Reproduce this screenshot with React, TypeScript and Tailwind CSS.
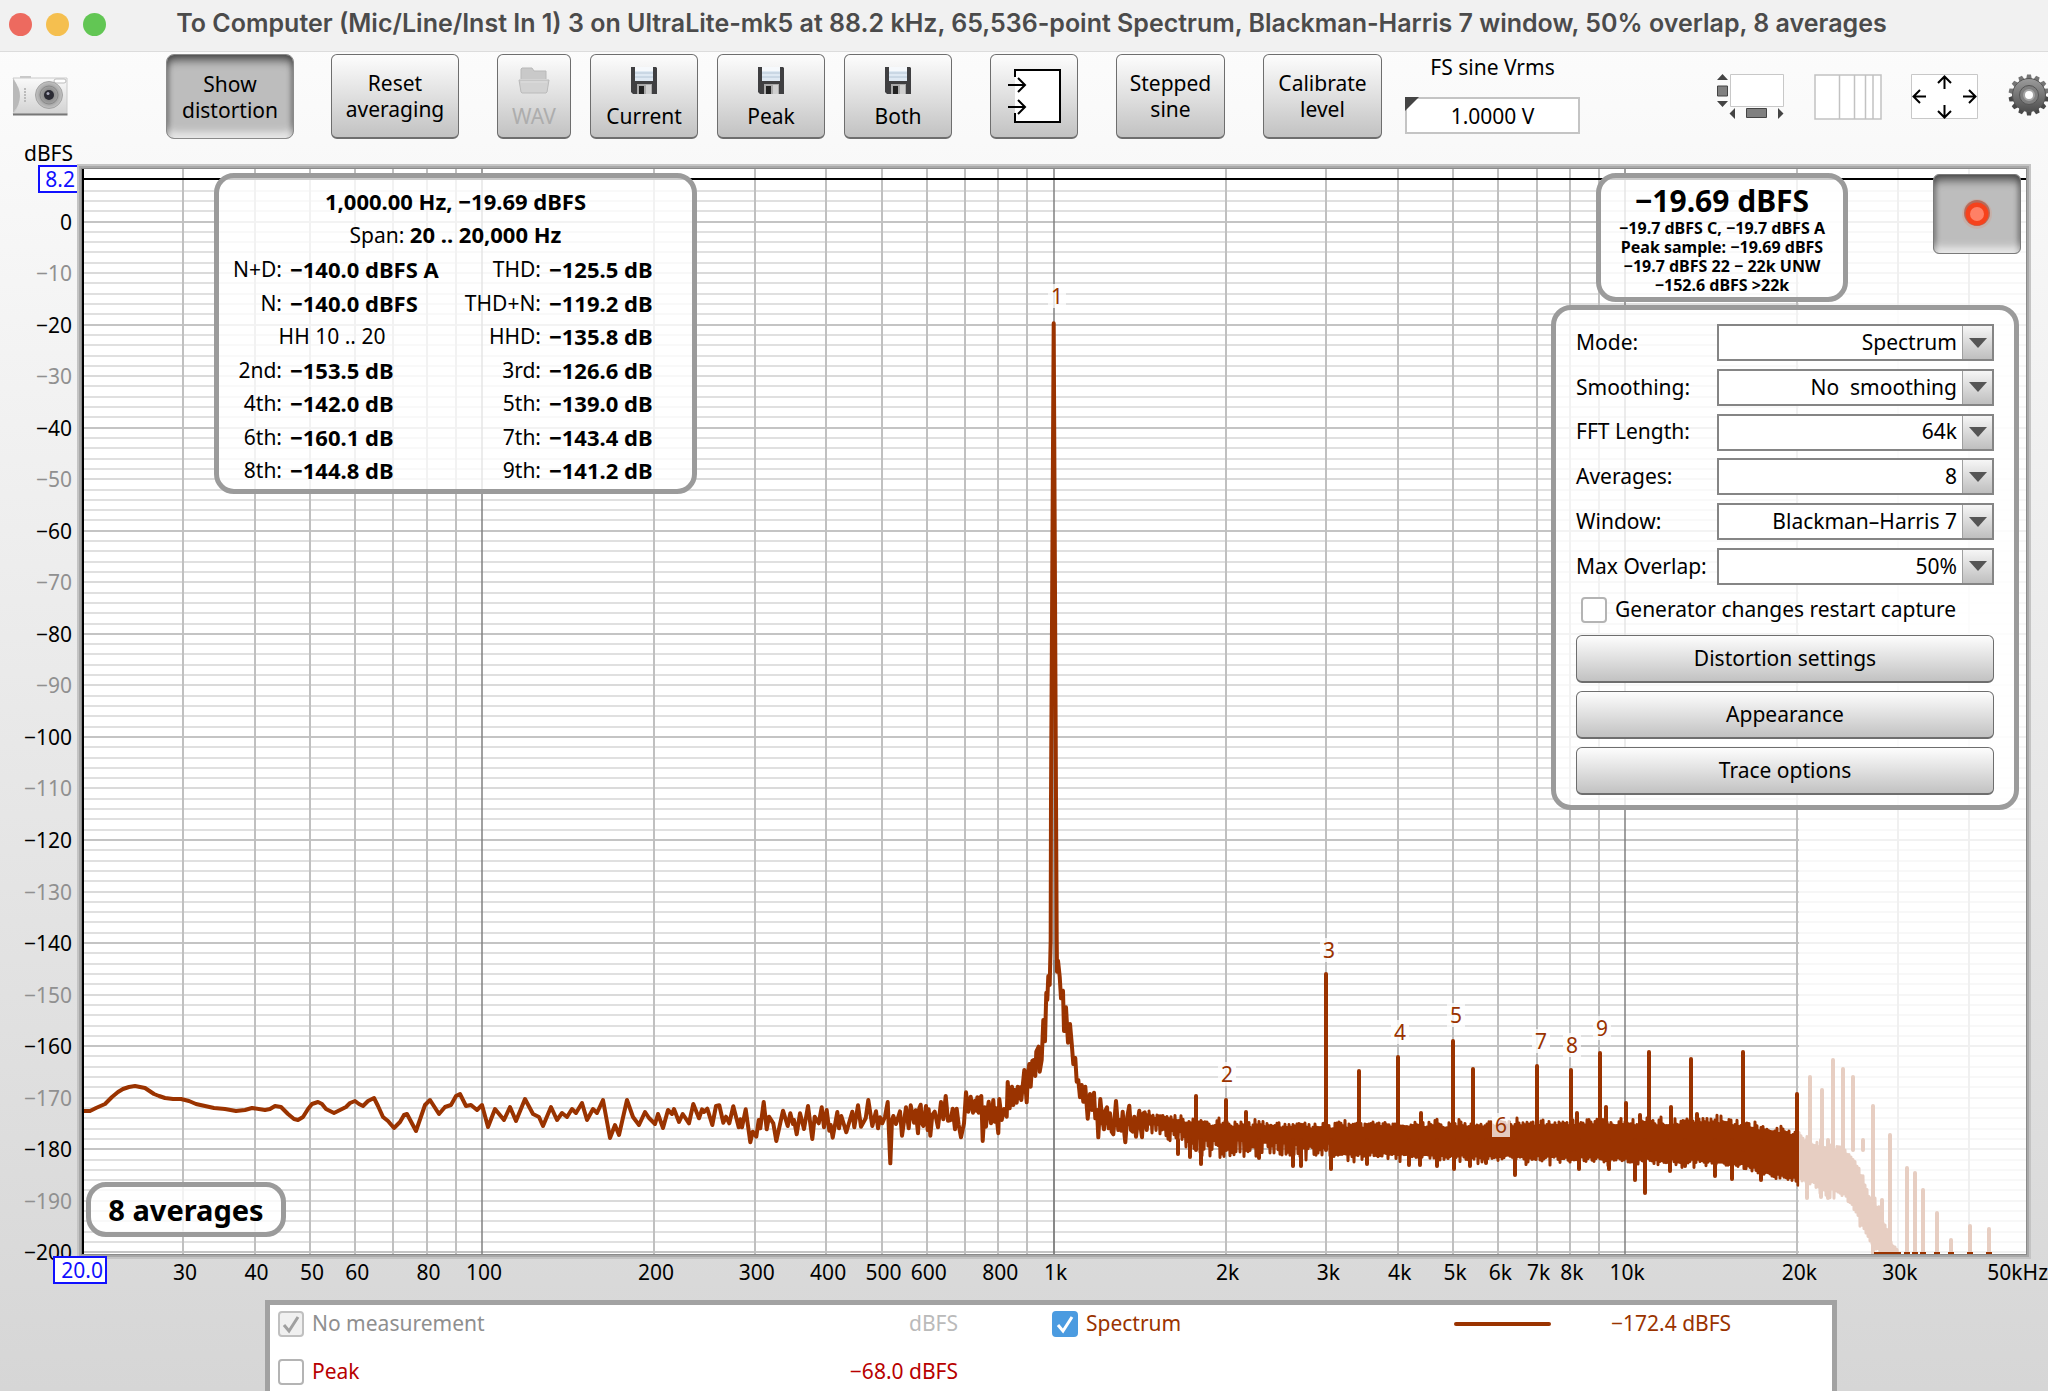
import React, { ReactNode } from 'react';

/* ---------- plot geometry ---------- */

const PLOT = { left: 82, top: 169, width: 1944, height: 1085 };

const xOf = (hz: number) => 482 + (Math.log10(hz) - 2) * 571.6;
const yOf = (db: number) => 221.5 - db * 5.154;

const pctX = (x: number) => `${((x - PLOT.left) / PLOT.width) * 100}%`;
const pctY = (y: number) => `${((y - PLOT.top) / PLOT.height) * 100}%`;

const GRID_HZ = [
  30, 40, 50, 60, 70, 80, 90, 100, 200, 300, 400, 500, 600, 700, 800, 900, 1000, 2000, 3000, 4000, 5000, 6000, 7000,
  8000, 9000, 10000, 20000, 30000, 40000,
];

const FREQ_LABELS: [number, string][] = [
  [30, '30'],
  [40, '40'],
  [50, '50'],
  [60, '60'],
  [80, '80'],
  [100, '100'],
  [200, '200'],
  [300, '300'],
  [400, '400'],
  [500, '500'],
  [600, '600'],
  [800, '800'],
  [1000, '1k'],
  [2000, '2k'],
  [3000, '3k'],
  [4000, '4k'],
  [5000, '5k'],
  [6000, '6k'],
  [7000, '7k'],
  [8000, '8k'],
  [10000, '10k'],
  [20000, '20k'],
  [30000, '30k'],
];

const HARMONICS: [string, number, number][] = [
  ['1', 1057, 296],
  ['2', 1227, 1074],
  ['3', 1329, 950],
  ['4', 1400, 1032],
  ['5', 1456, 1015],
  ['6', 1501, 1125],
  ['7', 1541, 1041],
  ['8', 1572, 1045],
  ['9', 1602, 1028],
];

/* ---------- trace data ---------- */

const LOW: number[][] = [
  [83, 1111], [90, 1111], [96, 1108], [105, 1104], [112, 1097], [118, 1092], [123, 1089], [129, 1087], [135, 1086], [140, 1087],
  [145, 1088], [154, 1094], [159, 1096], [165, 1098], [173, 1099], [181, 1099], [189, 1101], [196, 1104], [205, 1106],
  [214, 1108], [225, 1109], [236, 1111], [245, 1110], [252, 1108], [265, 1110], [270, 1109], [275, 1106], [281, 1107],
  [288, 1114], [294, 1119], [298, 1120], [303, 1117], [308, 1109], [312, 1104], [318, 1102], [322, 1104], [326, 1109],
  [334, 1113], [346, 1107], [350, 1103], [355, 1101], [359, 1104], [363, 1106], [368, 1101], [374, 1098], [378, 1106],
  [383, 1117], [388, 1121], [394, 1128], [400, 1122], [404, 1115], [407, 1114], [416, 1131], [425, 1105], [430, 1100],
  [439, 1114], [445, 1107], [451, 1105], [456, 1096], [460, 1094], [466, 1106], [471, 1105], [477, 1110], [482, 1105],
  [488, 1127], [495, 1109], [504, 1120], [510, 1107], [516, 1121], [525, 1099], [533, 1114], [539, 1117], [543, 1126],
  [551, 1107], [557, 1120], [562, 1113], [567, 1117], [572, 1109], [576, 1113], [582, 1103], [587, 1120], [593, 1109],
  [597, 1113], [603, 1100], [610, 1138], [615, 1125], [619, 1135], [627, 1100], [633, 1117], [639, 1125], [645, 1112],
  [649, 1118], [655, 1124], [658, 1114], [663, 1128], [668, 1110], [672, 1114], [674, 1109], [679, 1122],
];

// offsets from (680, 1040) in thirds
const MID: number[][] = [
  [8, 222], [27, 250], [40, 192], [57, 235], [66, 208], [72, 216], [82, 206], [97, 255], [108, 198], [118, 196], [130, 248],
  [138, 230], [148, 250], [160, 199], [176, 262], [181, 238], [186, 262], [197, 208], [211, 307], [218, 275], [229, 290],
  [236, 240], [241, 265], [251, 186], [260, 268], [267, 230], [280, 250], [289, 303], [309, 212], [323, 258], [331, 220],
  [339, 252], [342, 240], [350, 283], [360, 220], [372, 267], [384, 198], [397, 297], [404, 230], [416, 250], [425, 202],
  [432, 262], [440, 210], [448, 272], [452, 255], [458, 293], [472, 216], [477, 265], [484, 228], [499, 277], [517, 215],
  [523, 262], [534, 196], [543, 260], [557, 235], [565, 180], [577, 258], [588, 214], [594, 265], [600, 232], [607, 250],
  [615, 230], [623, 186], [631, 370], [636, 240], [640, 228], [648, 252], [660, 214], [666, 287], [678, 202], [686, 265],
  [692, 196], [702, 248], [707, 211], [714, 280], [718, 205], [722, 194], [726, 250], [730, 258], [738, 198], [743, 270],
  [746, 208], [751, 287], [757, 225], [764, 215], [774, 262], [783, 186], [790, 238], [797, 168], [804, 242], [812, 240],
  [818, 206], [825, 268], [830, 206], [836, 255], [843, 292], [852, 250], [858, 157], [865, 215], [872, 170], [879, 218],
  [885, 182], [889, 212], [892, 172], [896, 218], [900, 175], [904, 168], [908, 303], [914, 202], [918, 260], [922, 215],
  [926, 185], [933, 250], [940, 180], [944, 245], [948, 205], [951, 240], [955, 280], [958, 177], [965, 240], [972, 207],
  [980, 230], [983, 126], [989, 205], [993, 150], [996, 140], [1000, 195], [1004, 150], [1010, 188], [1013, 140], [1017, 175],
  [1021, 142], [1024, 180], [1033, 90], [1040, 187],
];

// offsets from (960, 900) in thirds, runs through the fundamental
const PEAK: number[][] = [
  [204, 520], [208, 492], [212, 560], [217, 482], [221, 480], [226, 528], [229, 455], [236, 440], [239, 515], [245, 480],
  [250, 360], [255, 424], [259, 278], [262, 300], [265, 228], [269, 255], [272, 120], [273, -300], [281, -1730],
  [288, -300], [290, 120], [291, 215], [294, 182], [299, 230], [303, 295], [309, 272], [312, 393], [318, 322], [324, 428],
  [330, 372], [335, 430], [340, 492], [346, 474], [350, 545], [355, 540], [360, 592], [365, 555], [370, 605], [376, 560],
  [383, 656], [390, 582], [396, 630], [402, 578], [406, 655], [411, 630], [415, 712], [421, 597], [427, 660], [432, 688],
  [436, 632], [441, 622], [446, 685], [450, 640], [455, 695], [460, 703], [468, 603], [475, 690], [480, 660], [484, 692],
  [488, 635], [492, 690], [496, 727], [502, 650], [508, 617], [513, 690], [518, 695], [523, 650], [528, 710], [534, 660],
  [538, 632], [543, 690], [546, 712], [550, 640], [554, 637], [560, 690], [565, 645],
];

// x, upper edge, lower edge of the noise band
const BAND: number[][] = [
  [1149, 1113, 1134], [1170, 1114, 1142], [1200, 1120, 1152], [1250, 1122, 1154], [1300, 1123, 1156], [1350, 1123, 1157],
  [1400, 1122, 1157], [1450, 1122, 1160], [1520, 1121, 1160], [1600, 1120, 1162], [1660, 1120, 1163], [1720, 1118, 1165],
  [1740, 1121, 1168], [1765, 1126, 1176], [1798, 1131, 1182], [1815, 1143, 1188], [1832, 1146, 1194], [1842, 1142, 1196],
  [1853, 1156, 1211], [1862, 1172, 1232], [1870, 1194, 1245], [1879, 1204, 1256], [1888, 1234, 1256], [1900, 1254, 1256],
];

const SPIKES: number[][] = [
  [1196, 1096], [1226, 1100], [1246, 1112], [1326, 974], [1359, 1071], [1398, 1057], [1421, 1113], [1453, 1041], [1473, 1069],
  [1537, 1066], [1571, 1070], [1577, 1113], [1600, 1053], [1606, 1107], [1626, 1103], [1640, 1115], [1649, 1052],
  [1671, 1107], [1691, 1059], [1697, 1114], [1743, 1052], [1797, 1094], [1810, 1077], [1822, 1090], [1833, 1060],
  [1843, 1069], [1853, 1077], [1863, 1140], [1873, 1106], [1882, 1200], [1890, 1135], [1907, 1168], [1915, 1173],
  [1923, 1190], [1937, 1213], [1951, 1240], [1970, 1226], [1989, 1229],
];

const DIPS: number[][] = [
  [1178, 1154], [1190, 1157], [1201, 1164], [1259, 1158], [1293, 1166], [1301, 1166], [1331, 1169], [1367, 1164],
  [1409, 1165], [1420, 1165], [1437, 1166], [1454, 1169], [1470, 1166], [1486, 1163], [1515, 1175], [1579, 1169],
  [1609, 1169], [1635, 1180], [1645, 1193], [1670, 1171], [1685, 1166], [1715, 1176], [1732, 1179], [1761, 1180],
  [1807, 1198], [1821, 1197], [1828, 1198],
];

function bandAt(x: number) {
  const i = Math.max(1, BAND.findIndex((b) => b[0] >= x));
  const [x0, t0, b0] = BAND[i - 1];
  const [x1, t1, b1] = BAND[i];
  const k = (x - x0) / (x1 - x0);
  return [t0 + (t1 - t0) * k, b0 + (b1 - b0) * k];
}

function buildNoise() {
  let seed = 4711;
  const rand = () => {
    seed = (seed * 16807) % 2147483647;
    return seed / 2147483647;
  };
  const points: string[] = [];
  for (let x = 1149; x < 1899; x += 2) {
    const [top, bottom] = bandAt(x);
    const up = rand() < 0.12 ? -3 * rand() : 6 * rand();
    const spread = x < 1330 ? 14 : 5;
    const down = rand() < 0.15 ? 5 * rand() : -spread * rand();
    points.push(`${x},${(top + up).toFixed(1)}`, `${x + 1},${(bottom + down).toFixed(1)}`);
  }
  return points.join(' ');
}

const linePoints = [
  ...LOW,
  ...MID.map(([x, y]) => [680 + x / 3, 1040 + y / 3]),
  ...PEAK.map(([x, y]) => [960 + x / 3, 900 + y / 3]),
]
  .map(([x, y]) => `${x.toFixed(1)},${y.toFixed(1)}`)
  .join(' ');

const noisePoints = buildNoise();

const spikePath = [
  ...SPIKES.map(([x, y]) => `M${x} ${y}V${x > 1870 ? 1254 : 1150}`),
  ...DIPS.map(([x, y]) => `M${x} 1140V${y}`),
].join('');

/* ---------- shared bits ---------- */

const raised =
  'rounded-md border border-[#6e6e6e] border-b-2 bg-linear-to-b from-[#fdfdfd] via-[#e0e0e0] to-[#c2c2c2] text-black';
const panel = 'rounded-[20px] border-[5px] border-[#9b9b9b] bg-white/80';

interface ToolButtonProps {
  className?: string;
  disabled?: boolean;
  label?: string;
  children: ReactNode;
}

function ToolButton({ className = '', disabled, label, children }: ToolButtonProps) {
  return (
    <button
      type="button"
      disabled={disabled}
      aria-label={label}
      className={`${raised} flex h-[85px] shrink-0 flex-col items-center justify-center leading-[26px] disabled:text-[#adadad] ${className}`}
    >
      {children}
    </button>
  );
}

function Floppy() {
  return (
    <svg width="28" height="28" viewBox="0 0 28 28" className="mt-1 mb-2">
      <path d="M1 0h25l1 1v26H3l-2-2z" fill="#3f3f41" />
      <path d="M5 0h18v14H5z" fill="#dfe9f3" />
      <path d="M5 0h18v4H5z" fill="#f6f9fc" />
      <path d="M5 6h18M5 10h18" stroke="#b5c6d6" />
      <path d="M7 17h15v10H7z" fill="#a9a9a9" />
      <path d="M9 19h5v8H9z" fill="#222" />
      <path d="M16 18h5v9h-5z" fill="#cfcfcf" />
    </svg>
  );
}

function Folder() {
  return (
    <svg width="32" height="28" viewBox="0 0 32 28" className="mt-1 mb-2">
      <path d="M3 12V2l1-1h10l2 3h12v8" fill="#c9c9c9" stroke="#b9b9b9" />
      <path d="M1 13h30l-2 12-1 1H4l-1-1z" fill="#d2d2d2" stroke="#bababa" />
      <path d="M3 15h26" stroke="#dedede" />
    </svg>
  );
}

function CameraIcon() {
  return (
    <svg width="57" height="40" viewBox="0 0 57 40">
      <defs>
        <linearGradient id="camBody" x1="0" y1="0" x2="0" y2="1">
          <stop offset="0" stopColor="#fafafa" />
          <stop offset="1" stopColor="#d2d2d2" />
        </linearGradient>
        <radialGradient id="camLens">
          <stop offset="0" stopColor="#777" />
          <stop offset="0.55" stopColor="#9b9b9b" />
          <stop offset="1" stopColor="#c4c4c4" />
        </radialGradient>
      </defs>
      <path d="M8 2V0h11v2z" fill="#c9c9c9" />
      <path d="M1 2h54v36H1q7-9 5-20Q5 8 1 2z" fill="url(#camBody)" stroke="#cacaca" />
      <path d="M1 3q14 17 0 34z" fill="#b9b9b9" />
      <path d="M1 38.500h54.500" stroke="#777" strokeWidth="2" />
      <path d="M13 12v14" stroke="#bbb" strokeWidth="2" strokeDasharray="2 1" />
      <rect x="42" y="3" width="12" height="4" rx="2" fill="#fff" stroke="#bbb" />
      <circle cx="37" cy="19" r="13.500" fill="url(#camLens)" stroke="#a3a3a3" />
      <circle cx="37" cy="19" r="9" fill="none" stroke="#8a8a8a" />
      <circle cx="37" cy="19" r="5" fill="#2a2a33" />
      <circle cx="36" cy="17.500" r="1.500" fill="#aab" />
    </svg>
  );
}

function InputIcon() {
  return (
    <svg width="54" height="56" viewBox="0 0 54 56" fill="none" stroke="#000" strokeWidth="2">
      <path d="M8 2h45v52H8z" fill="#fff" stroke="none" />
      <path d="M8 9V2h45v52H8v-9" />
      <path d="M1 17h17M11 10l7 7-7 7M1 39h17M11 32l7 7-7 7" />
    </svg>
  );
}

function ScrollbarsIcon() {
  return (
    <svg width="68" height="45" viewBox="0 0 68 45">
      <path d="M13.500 .5h53v32h-53z" fill="#fff" stroke="#c8c8c8" />
      <path d="M0 6L5.500 0 11 6zM0 27l5.500 6 5.500-6zM18 34v11l-5.500-5.500zM61 34v11l5.500-5.500z" fill="#444" />
      <path d="M.5 12h10v10H.5zM29.500 34.500h20v9h-20z" fill="#808080" stroke="#444" />
    </svg>
  );
}

function LogGridIcon() {
  return (
    <svg width="68" height="46" viewBox="0 0 68 46">
      <path d="M1 1h66v44H1zM25.500 1v44M40.500 1v44M51.500 1v44M59 1v44" fill="#fff" stroke="#c2c2c2" strokeWidth="1.500" />
    </svg>
  );
}

function FitIcon() {
  return (
    <svg width="68" height="46" viewBox="0 0 68 46" fill="none" stroke="#000" strokeWidth="2">
      <path d="M.5 .5h66v44H.5z" fill="#fff" stroke="#c8c8c8" strokeWidth="1" />
      <path d="M33.500 15V3M27 9l6.500-6.500L40 9M33.500 31v12M27 37l6.500 6.500L40 37" />
      <path d="M15 22.500H3M9 16l-6.500 6.500L9 29M52 22.500h12M58 16l6.500 6.500L58 29" />
    </svg>
  );
}

function GearIcon() {
  const teeth = Array.from({ length: 14 }, (_, i) => (i * 360) / 14);
  return (
    <svg width="42" height="42" viewBox="-21 -21 42 42">
      <defs>
        <linearGradient id="gearFill" x1="0" y1="0" x2="0" y2="1">
          <stop offset="0" stopColor="#9c9c9c" />
          <stop offset="1" stopColor="#4f4f4f" />
        </linearGradient>
      </defs>
      {teeth.map((a) => (
        <path key={a} d="M-3-15L-2-20.500H2L3-15z" transform={`rotate(${a})`} fill={Math.abs(a - 180) < 90 ? '#484848' : '#757575'} />
      ))}
      <circle r="16.500" fill="url(#gearFill)" stroke="#555" />
      <circle r="9.500" fill="#808080" stroke="#555" />
      <circle r="5" fill="#fff" stroke="#a5a5a5" strokeWidth="2" />
    </svg>
  );
}

interface TickBoxProps {
  id: string;
  label: string;
  className?: string;
  checked?: boolean;
  disabled?: boolean;
}

function TickBox({ id, label, className = '', checked, disabled }: TickBoxProps) {
  return (
    <div className={`flex items-center gap-2 ${className}`}>
      <span className="grid">
        <input
          id={id}
          type="checkbox"
          defaultChecked={checked}
          disabled={disabled}
          className="peer col-start-1 row-start-1 size-[26px] appearance-none rounded border-2 border-[#b4b4b4] bg-white checked:border-[#4b9be0] checked:bg-[#4b9be0] disabled:border-[#c0c0c0] disabled:bg-[#f0f0f0]"
        />
        <svg
          viewBox="0 0 26 26"
          className="pointer-events-none invisible col-start-1 row-start-1 size-[26px] stroke-white peer-checked:visible peer-disabled:stroke-[#a0a0a0]"
          fill="none"
          strokeWidth="3"
        >
          <path d="M6 14l5 6L20 6" />
        </svg>
      </span>
      <label htmlFor={id}>{label}</label>
    </div>
  );
}

/* ---------- sections ---------- */

function TitleBar() {
  return (
    <header className="flex h-[52px] items-start border-b border-[#dcdcdc] bg-[#f1f1f1] pl-[9px]">
      <div className="flex h-12 w-[98px] shrink-0 items-center gap-[14px]">
        <span className="size-[23px] rounded-full bg-[#ed6a5f]" />
        <span className="size-[23px] rounded-full bg-[#f5bf4f]" />
        <span className="size-[23px] rounded-full bg-[#62c654]" />
      </div>
      <h1 className="flex-1 pr-[92px] text-center font-[Inter,sans-serif] text-[25px] leading-[46px] font-semibold whitespace-nowrap text-[#4b4b4b]">
        To Computer (Mic/Line/Inst In 1) 3 on UltraLite-mk5 at 88.2 kHz, 65,536-point Spectrum, Blackman-Harris 7 window,
        50% overlap, 8 averages
      </h1>
    </header>
  );
}

function Toolbar() {
  return (
    <div className="flex h-[89px] items-start overflow-hidden pt-0.5 pl-3">
      <button type="button" aria-label="Capture image" className="mt-[22px] mr-[97px] shrink-0">
        <CameraIcon />
      </button>
      <button
        type="button"
        aria-pressed="true"
        className="h-[85px] w-32 shrink-0 rounded-lg border border-[#8a8a8a] bg-[#bdbdbd] leading-[26px] text-black shadow-[inset_0_8px_10px_-3px_#4a4a4a,inset_0_-8px_8px_-3px_#f2f2f2,inset_3px_0_4px_-1px_#777,inset_-3px_0_4px_-1px_#777]"
      >
        Show
        <br />
        distortion
      </button>
      <ToolButton className="ml-[37px] w-32">
        <span>Reset</span>
        <span>averaging</span>
      </ToolButton>
      <ToolButton className="ml-[38px] w-[74px]" disabled>
        <Folder />
        WAV
      </ToolButton>
      <div className="ml-[19px] flex gap-[19px]">
        <ToolButton className="w-[108px]">
          <Floppy />
          Current
        </ToolButton>
        <ToolButton className="w-[108px]">
          <Floppy />
          Peak
        </ToolButton>
        <ToolButton className="w-[108px]">
          <Floppy />
          Both
        </ToolButton>
      </div>
      <div className="ml-[38px] flex gap-[38px]">
        <ToolButton className="w-[88px]" label="Input selection">
          <InputIcon />
        </ToolButton>
        <ToolButton className="w-[109px]">
          <span>Stepped</span>
          <span>sine</span>
        </ToolButton>
        <ToolButton className="w-[119px]">
          <span>Calibrate</span>
          <span>level</span>
        </ToolButton>
      </div>
      <div className="ml-[23px] flex w-[175px] shrink-0 flex-col items-center gap-4">
        <label htmlFor="vrms" className="leading-[27px]">
          FS sine Vrms
        </label>
        <span className="relative w-full">
          <input
            id="vrms"
            defaultValue="1.0000 V"
            className="block h-[37px] w-full border-2 border-[#c4c4c4] bg-white text-center text-black"
          />
          <svg width="14" height="14" viewBox="0 0 14 14" className="absolute top-0 left-0">
            <path d="M0 0h14L0 14z" fill="#444" />
          </svg>
        </span>
      </div>
      <div className="ml-auto flex shrink-0 items-start gap-[29px] pt-5">
        <button type="button" aria-label="Scrollbars">
          <ScrollbarsIcon />
        </button>
        <button type="button" aria-label="Log frequency axis">
          <LogGridIcon />
        </button>
        <button type="button" aria-label="Graph limits">
          <FitIcon />
        </button>
        <button type="button" aria-label="Graph settings" className="-mr-0.5">
          <GearIcon />
        </button>
      </div>
    </div>
  );
}

function Graph() {
  const dbLines = Array.from({ length: 104 }, (_, i) => 6 - i * 2);
  return (
    <svg
      viewBox={`${PLOT.left} ${PLOT.top} ${PLOT.width} ${PLOT.height}`}
      preserveAspectRatio="none"
      className="absolute inset-0 size-full"
    >
      {dbLines.map((db) => {
        const y = Math.round(yOf(db));
        const major = db % 20 === 0;
        return (
          <path key={db} d={`M82 ${y}H2026`} stroke={major ? '#c4c4c4' : db % 10 === 0 ? '#dadada' : '#e0e0e0'} strokeWidth={2} />
        );
      })}
      {GRID_HZ.map((hz) => {
        const decade = hz === 100 || hz === 1000 || hz === 10000;
        return (
          <path
            key={hz}
            d={`M${Math.round(xOf(hz))} 169V1254`}
            stroke={decade ? '#808080' : '#c0c0c0'}
            strokeWidth={decade ? 1.5 : 2}
          />
        );
      })}
      <g fill="none" stroke="#9a3300" strokeLinejoin="round" strokeLinecap="round">
        <polyline points={linePoints} strokeWidth={4} />
        <polyline points={noisePoints} strokeWidth={3} />
        <path d={spikePath} strokeWidth={4} />
      </g>
      <path d="M1054 960V1254" stroke="#808080" strokeWidth={1.5} />
      <path d="M1799 169h227v1085h-227z" fill="#fff" fillOpacity={0.76} />
      <path
        d="M1874 1253H1901M1904 1253h6M1912 1253h6M1920 1253h6M1934 1253h6M1948 1253h6M1967 1253h6M1986 1253h6"
        stroke="#9a3300"
        strokeWidth={2}
      />
      <path d="M82 179H2026" stroke="#000" strokeWidth={2} />
      <path d="M83 169V1254" stroke="#000" strokeWidth={2} />
    </svg>
  );
}

const DISTORTION: [string, string, string, string][] = [
  ['N+D:', '−140.0 dBFS A', 'THD:', '−125.5 dB'],
  ['N:', '−140.0 dBFS', 'THD+N:', '−119.2 dB'],
  ['', 'HH 10 .. 20', 'HHD:', '−135.8 dB'],
  ['2nd:', '−153.5 dB', '3rd:', '−126.6 dB'],
  ['4th:', '−142.0 dB', '5th:', '−139.0 dB'],
  ['6th:', '−160.1 dB', '7th:', '−143.4 dB'],
  ['8th:', '−144.8 dB', '9th:', '−141.2 dB'],
];

function DistortionPanel() {
  return (
    <section className={`${panel} absolute top-1 left-[132px] h-[321px] w-[483px] pt-1.5 pb-0.5`}>
      <table className="h-full w-full table-fixed leading-6 whitespace-nowrap">
        <colgroup>
          <col className="w-[67px]" />
          <col className="w-[159px]" />
          <col className="w-[100px]" />
          <col />
        </colgroup>
        <tbody>
          <tr>
            <td colSpan={4} className="text-center text-[22px] font-bold">
              1,000.00 Hz, −19.69 dBFS
            </td>
          </tr>
          <tr>
            <td colSpan={4} className="text-center">
              Span: <b className="text-[22px]">20 .. 20,000 Hz</b>
            </td>
          </tr>
          {DISTORTION.map(([a, av, b, bv]) => (
            <tr key={b}>
              {a ? (
                <>
                  <th className="pr-1 text-right font-normal">{a}</th>
                  <td className="pl-1 text-[22px] font-bold">{av}</td>
                </>
              ) : (
                <td colSpan={2} className="text-center">
                  {av}
                </td>
              )}
              <th className="pr-1 text-right font-normal">{b}</th>
              <td className="pl-1 text-[22px] font-bold">{bv}</td>
            </tr>
          ))}
        </tbody>
      </table>
    </section>
  );
}

function LevelPanel() {
  return (
    <section
      className={`${panel} absolute top-1 right-[178px] flex h-[129px] w-[252px] flex-col items-center pt-[5px] text-base leading-[19px] font-bold whitespace-nowrap`}
    >
      <p className="text-[30px] leading-9">−19.69 dBFS</p>
      <p>−19.7 dBFS C, −19.7 dBFS A</p>
      <p>Peak sample: −19.69 dBFS</p>
      <p>−19.7 dBFS 22 − 22k UNW</p>
      <p>−152.6 dBFS &gt;22k</p>
    </section>
  );
}

const FIELDS: [string, string, string][] = [
  ['mode', 'Mode:', 'Spectrum'],
  ['smoothing', 'Smoothing:', 'No\u00a0 smoothing'],
  ['fft', 'FFT Length:', '64k'],
  ['averages', 'Averages:', '8'],
  ['window', 'Window:', 'Blackman–Harris 7'],
  ['overlap', 'Max Overlap:', '50%'],
];

function ControlPanel() {
  return (
    <section className={`${panel} absolute top-[136px] right-[7px] w-[468px] px-5 pt-3.5 pb-2.5`}>
      <div className="flex h-[261px] flex-col justify-between">
        {FIELDS.map(([id, label, value]) => (
          <div key={id} className="flex items-center">
            <label htmlFor={id} className="w-[141px] whitespace-nowrap">
              {label}
            </label>
            <span className="relative flex-1">
              <select
                id={id}
                className="block h-[37px] w-full appearance-none border-2 border-[#858585] bg-white pr-[35px] text-right text-black [text-align-last:right]"
              >
                <option>{value}</option>
              </select>
              <span className="pointer-events-none absolute inset-y-0.5 right-0.5 flex w-[30px] items-center justify-center border-l border-[#a0a0a0] bg-linear-to-b from-[#f6f6f6] to-[#bfbfbf]">
                <svg width="18" height="10" viewBox="0 0 18 10">
                  <path d="M0 0h18L9 10z" fill="#555" />
                </svg>
              </span>
            </span>
          </div>
        ))}
      </div>
      <TickBox id="restart" label="Generator changes restart capture" className="mt-2 mb-2 h-[34px] pl-[5px]" />
      <div className="flex flex-col gap-2">
        {['Distortion settings', 'Appearance', 'Trace options'].map((text) => (
          <button key={text} type="button" className={`${raised} h-12`}>
            {text}
          </button>
        ))}
      </div>
    </section>
  );
}

function RecordButton() {
  return (
    <button
      type="button"
      aria-label="Record"
      aria-pressed="true"
      className="absolute top-[5px] right-[5px] flex h-[80px] w-[88px] items-center justify-center rounded-md border border-[#7a7a7a] bg-[#bdbdbd] shadow-[inset_0_8px_10px_-3px_#4a4a4a,inset_0_-8px_8px_-3px_#f2f2f2,inset_3px_0_4px_-1px_#777,inset_-3px_0_4px_-1px_#777]"
    >
      <svg width="32" height="32" viewBox="0 0 32 32">
        <circle cx="16" cy="16" r="15" fill="#ff6a3a" fillOpacity="0.15" />
        <circle cx="16" cy="15" r="13" fill="#a8402a" fillOpacity="0.6" />
        <circle cx="16" cy="16" r="11.500" fill="#f6421c" />
        <circle cx="16" cy="16" r="7" fill="#ff8066" />
      </svg>
    </button>
  );
}

function Legend() {
  return (
    <footer className="mr-[211px] ml-[265px] h-[91px] overflow-hidden border-x-[5px] border-t-[5px] border-[#a2a2a2] bg-white pl-2">
      <div className="flex h-[37px] items-center">
        <TickBox id="none" label="No measurement" checked disabled className="w-[480px] text-[#8f8f8f]" />
        <span className="w-[200px] text-right text-[#bababa]">dBFS</span>
        <TickBox id="spectrum" label="Spectrum" checked className="ml-[94px] w-[402px] text-[#9a3300]" />
        <span className="h-1 w-[97px] rounded-full bg-[#9a3300]" />
        <span className="ml-[60px] text-[#9a3300]">−172.4 dBFS</span>
      </div>
      <div className="mt-[11px] flex h-[37px] items-center text-[#b80000]">
        <TickBox id="peak" label="Peak" className="w-[480px]" />
        <span className="w-[200px] text-right">−68.0 dBFS</span>
      </div>
    </footer>
  );
}

export default function App() {
  const dbLabels = Array.from({ length: 21 }, (_, i) => -i * 10);
  return (
    <div className="flex min-h-screen flex-col overflow-hidden bg-linear-to-b from-[#fdfdfd] to-[#d6d6d6] font-['Noto_Sans',sans-serif] text-[21px] text-black">
      <TitleBar />
      <Toolbar />
      <div className="h-7 w-[73px] text-right leading-6">dBFS</div>
      <main className="flex min-h-[840px] flex-1">
        <div className="relative w-[82px] shrink-0 leading-6">
          {dbLabels.map((db) => (
            <span
              key={db}
              className={`absolute right-[10px] -translate-y-1/2 ${db % 20 === 0 ? '' : 'text-[#909090]'}`}
              style={{ top: pctY(yOf(db)) }}
            >
              {db === 0 ? '0' : `−${-db}`}
            </span>
          ))}
          <input
            aria-label="Upper level limit"
            defaultValue="8.2"
            className="absolute -top-1 right-[3px] h-7 w-[41px] border-2 border-[#1010ff] bg-white pr-0.5 text-right text-[#1010ff]"
          />
        </div>
        <div className="relative flex-1 bg-white shadow-[0_0_0_1px_#8a8a8a,0_0_0_3px_#a8a8a8,0_0_0_5px_#c4c4c4]">
          <Graph />
          {HARMONICS.map(([n, x, y]) => (
            <span
              key={n}
              className="absolute w-[18px] -translate-1/2 bg-white/75 text-center leading-6 text-[#9a3300]"
              style={{ left: pctX(x), top: pctY(y) }}
            >
              {n}
            </span>
          ))}
          <DistortionPanel />
          <LevelPanel />
          <RecordButton />
          <ControlPanel />
          <p
            className={`${panel} absolute bottom-[17px] left-1 flex h-[55px] w-[200px] items-center justify-center text-[29px] font-bold`}
          >
            8 averages
          </p>
        </div>
        <div className="w-[22px] shrink-0" />
      </main>
      <div className="relative mr-[22px] ml-[82px] h-[46px] leading-6">
        {FREQ_LABELS.map(([hz, text]) => (
          <span key={hz} className="absolute top-1.5 -translate-x-1/2" style={{ left: pctX(xOf(hz) + 2) }}>
            {text}
          </span>
        ))}
        <span className="absolute top-1.5 right-[-22px]">50kHz</span>
        <input
          aria-label="Lower frequency limit"
          defaultValue="20.0"
          className="absolute top-0.5 left-[-29px] h-7 w-[54px] border-2 border-[#1010ff] bg-white pr-0.5 text-right text-[#1010ff]"
        />
      </div>
      <Legend />
    </div>
  );
}
